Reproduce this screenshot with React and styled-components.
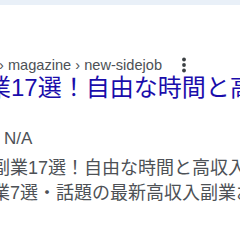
import React from "react";
import styled, { createGlobalStyle } from "styled-components";

const GlobalStyle = createGlobalStyle`
  html, body {
    margin: 0;
    padding: 0;
    background: #ffffff;
    overflow: hidden;
  }
  body {
    font-family: "Liberation Sans", Arial, "Noto Sans CJK JP", sans-serif;
  }
`;

const TopBand = styled.div`
  height: 5px;
  background: #e9f0f8;
`;

const Result = styled.div`
  margin-left: -6px;
  padding-top: 50px;
  display: flex;
  flex-direction: column;
`;

const CiteRow = styled.div`
  display: flex;
  align-items: center;
  height: 20px;
  gap: 10px;
  padding-left: ${(p) => p.$indent}px;
`;

const Cite = styled.cite`
  font-style: normal;
  font-size: 14.6px;
  line-height: 20px;
  color: #4d5156;
  white-space: nowrap;
`;

const MoreButton = styled.span`
  display: flex;
  width: 24px;
  height: 24px;
  color: #3c4043;
  flex: none;
`;

const Title = styled.h3`
  margin: 1px 0 0;
  font-weight: normal;
  font-size: 24px;
  line-height: 24px;
  color: #1a0dab;
  white-space: nowrap;
  margin-left: ${(p) => p.$indent}px;
`;

const Meta = styled.div`
  margin-top: 28px;
  font-size: 17px;
  line-height: 22px;
  color: #4d5156;
  padding-left: ${(p) => p.$indent}px;
`;

const Snippet = styled.div`
  margin-top: 6px;
  margin-left: ${(p) => p.$indent}px;
  font-size: 18px;
  line-height: 25px;
  color: #4d5156;
`;

const Line = styled.div`
  white-space: nowrap;
`;

function MoreVert() {
  return (
    <svg width="24" height="24" viewBox="0 0 24 24" fill="currentColor">
      <circle cx="12" cy="6.5" r="1.9" />
      <circle cx="12" cy="12" r="1.9" />
      <circle cx="12" cy="17.5" r="1.9" />
    </svg>
  );
}

export default function App() {
  return (
    <>
      <GlobalStyle />
      <TopBand />
      <Result>
        <CiteRow $indent={5}>
          <Cite>› magazine › new-sidejob</Cite>
          <MoreButton>
            <MoreVert />
          </MoreButton>
        </CiteRow>
        <Title $indent={-7}>業17選！自由な時間と高収入を得る方法</Title>
        <Meta $indent={10}>N/A</Meta>
        <Snippet $indent={-2}>
          <Line>副業17選！自由な時間と高収入を実現する方法</Line>
          <Line>業7選・話題の最新高収入副業おすすめ</Line>
        </Snippet>
      </Result>
    </>
  );
}
